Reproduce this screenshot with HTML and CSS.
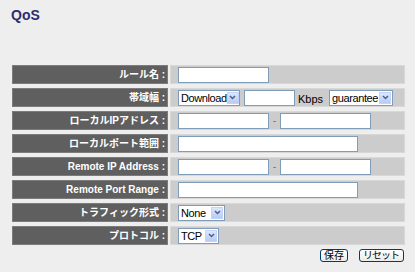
FILE: index.html
```html
<!DOCTYPE html>
<html lang="ja">
<head>
    <meta charset="UTF-8">
    <title>QoS</title>
    <link rel="stylesheet" href="styles.css">
</head>
<body>
    <h1 class="title">QoS</h1>

    <div class="qos-table">
        <div class="label-cell">ルール名 :</div>
        <div class="value-cell">
            <span class="text-box w92"></span>
        </div>

        <div class="label-cell">帯域幅 :</div>
        <div class="value-cell">
            <span class="select-box w60"><span class="sel-text">Download</span><span class="sel-btn"><svg width="7" height="5" viewBox="0 0 7 5"><polyline points="1,1 3.5,3.5 6,1" fill="none" stroke="#4d6185" stroke-width="1.5"/></svg></span></span>
            <span class="text-box w52"></span>
            <span class="unit">Kbps</span>
            <span class="select-box w62"><span class="sel-text">guarantee</span><span class="sel-btn"><svg width="7" height="5" viewBox="0 0 7 5"><polyline points="1,1 3.5,3.5 6,1" fill="none" stroke="#4d6185" stroke-width="1.5"/></svg></span></span>
        </div>

        <div class="label-cell">ローカルIPアドレス :</div>
        <div class="value-cell">
            <span class="text-box w92"></span>
            <span class="dash">-</span>
            <span class="text-box w92"></span>
        </div>

        <div class="label-cell">ローカルポート範囲 :</div>
        <div class="value-cell">
            <span class="text-box w181"></span>
        </div>

        <div class="label-cell">Remote IP Address :</div>
        <div class="value-cell">
            <span class="text-box w92"></span>
            <span class="dash">-</span>
            <span class="text-box w92"></span>
        </div>

        <div class="label-cell">Remote Port Range :</div>
        <div class="value-cell">
            <span class="text-box w181"></span>
        </div>

        <div class="label-cell">トラフィック形式 :</div>
        <div class="value-cell">
            <span class="select-box w45"><span class="sel-text">None</span><span class="sel-btn"><svg width="7" height="5" viewBox="0 0 7 5"><polyline points="1,1 3.5,3.5 6,1" fill="none" stroke="#4d6185" stroke-width="1.5"/></svg></span></span>
        </div>

        <div class="label-cell">プロトコル :</div>
        <div class="value-cell">
            <span class="select-box w39"><span class="sel-text">TCP</span><span class="sel-btn"><svg width="7" height="5" viewBox="0 0 7 5"><polyline points="1,1 3.5,3.5 6,1" fill="none" stroke="#4d6185" stroke-width="1.5"/></svg></span></span>
        </div>
    </div>

    <div class="actions">
        <button class="button">保存</button>
        <button class="button reset">リセット</button>
    </div>
</body>
</html>
```

FILE: styles.css
```css
body {
    margin: 0;
    background-color: #eeeeee;
    font-family: "Liberation Sans", Arial, "Noto Sans CJK JP", sans-serif;
    width: 415px;
}

.title {
    font-size: 14px;
    font-weight: bold;
    color: #2c2c6e;
    margin: 0;
    padding: 8px 0 0 11px;
    line-height: 14px;
}

.qos-table {
    display: grid;
    grid-template-columns: 156px 235px;
    grid-auto-rows: 19px;
    column-gap: 2px;
    row-gap: 4px;
    margin: 43px 0 0 12px;
}

.label-cell {
    background: #5f5f5f;
    border: 1px solid #7c7c7c;
    color: #ffffff;
    font-size: 10px;
    font-weight: bold;
    text-align: right;
    line-height: 17px;
    padding-right: 2px;
    white-space: nowrap;
}

.value-cell {
    background: #cccccc;
    border: 1px solid #d8d8d8;
    display: flex;
    align-items: center;
    padding-left: 7px;
    font-size: 11px;
    color: #000;
}

.text-box {
    display: inline-block;
    height: 14px;
    background: #ffffff;
    border: 1px solid #7f9db9;
}

.w92 { width: 89px; }
.w52 { width: 49px; margin-left: 4px; }
.w181 { width: 178px; }
.w60 { width: 58px; }
.w62 { width: 60px; }
.w45 { width: 43px; }
.w39 { width: 37px; }

.select-box {
    display: inline-flex;
    align-items: center;
    justify-content: space-between;
    height: 14px;
    background: #ffffff;
    border: 1px solid #7f9db9;
    padding-left: 2px;
    box-sizing: content-box;
    overflow: hidden;
}

.sel-text {
    font-size: 11px;
    line-height: 14px;
    letter-spacing: -0.4px;
    white-space: nowrap;
}

.sel-btn {
    width: 12px;
    height: 12px;
    margin-right: 1px;
    background: linear-gradient(#dde7fc, #b7cbf5);
    border: 1px solid #c3d3fd;
    box-sizing: border-box;
    display: flex;
    align-items: center;
    justify-content: center;
    flex: none;
}

.dash {
    font-size: 9px;
    color: #555;
    margin: 0 4px 0 4px;
}

.unit {
    margin: 0 6px 0 3px;
    font-size: 11px;
    position: relative;
    top: 1px;
}

.actions {
    display: flex;
    justify-content: flex-end;
    gap: 11px;
    margin: 4px 11px 0 0;
}

.button {
    font-family: "Liberation Sans", Arial, "Noto Sans CJK JP", sans-serif;
    font-size: 10px;
    height: 13px;
    line-height: 11px;
    padding: 0 3px;
    background: linear-gradient(#ffffff, #ecebe6);
    border: 1px solid #003c74;
    border-radius: 3px;
    color: #000;
    cursor: pointer;
}

.reset {
    letter-spacing: -1px;
    padding: 0 4px 0 3px;
}
```
